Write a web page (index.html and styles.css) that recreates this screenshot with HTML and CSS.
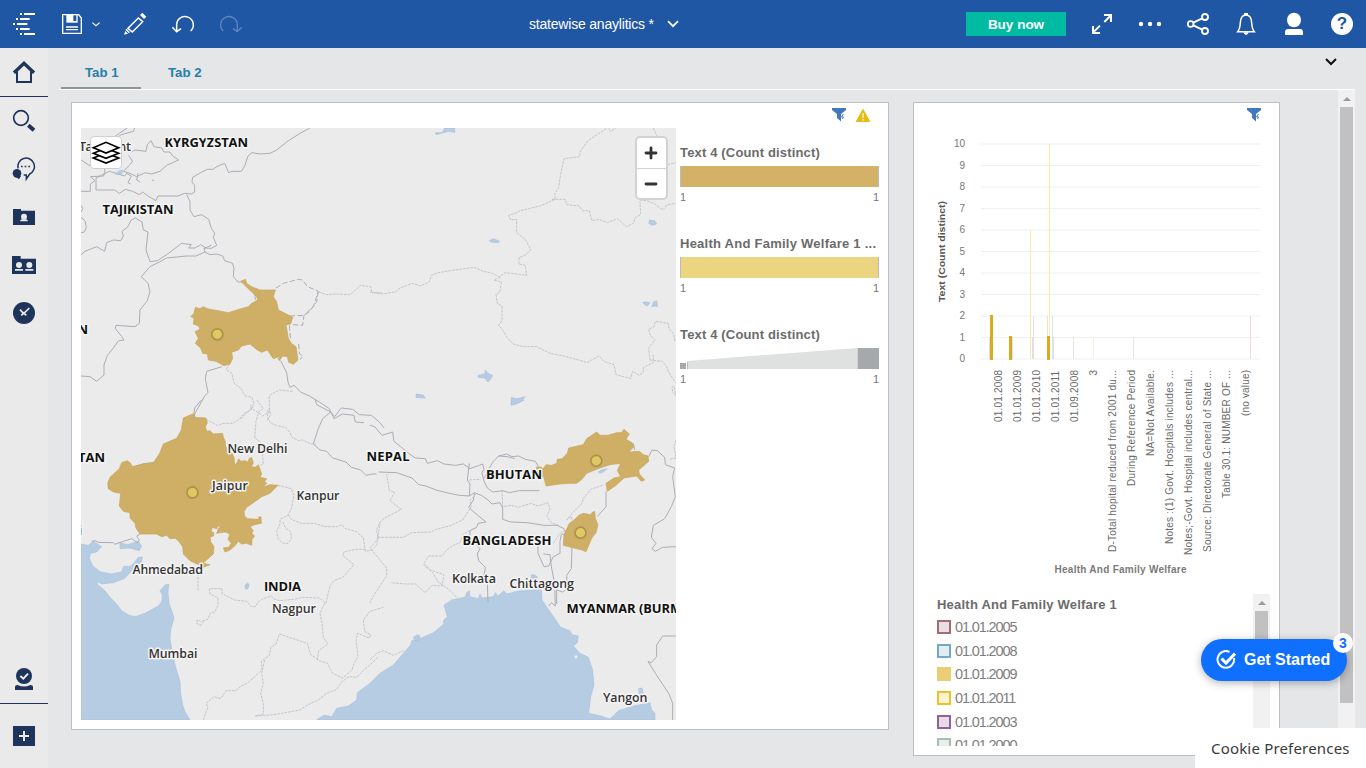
FILE: index.html
```html
<!DOCTYPE html>
<html lang="en">
<head>
<meta charset="utf-8">
<title>statewise anaylitics</title>
<link rel="stylesheet" href="styles.css">
</head>
<body>
<header class="topbar">
  <svg class="ic" width="48" height="48" viewBox="0 0 144 144"><path class="w" d="M60 39h6v6h-6zM72 39h33v6H72zM48 54h6v6h-6zM60 54h29v6H60zM39 69h6v6h-6zM51 69h31v6H51zM48 84h6v6h-6zM60 84h29v6H60zM60 99h6v6h-6zM72 99h33v6H72z"/></svg>
  <svg class="ic" width="63" height="48" viewBox="144 0 189 144"><path class="wl" stroke-width="4" d="M188 44h48l8 10v46h-56zM198 81h36M198 89h36"/><path class="w" d="M199 44h34v24h-34z"/><path fill="#2057a4" d="M220 46h9v17h-9z"/><path class="wl" stroke-width="3.500" d="M277 68l11 9 11-9"/></svg>
  <svg class="ic" width="48" height="48" viewBox="333 0 144 144"><path class="w" d="M372 104l4-11 8 8zM420 45l7-7 12 12-7 7z"/><path class="wl" stroke-width="4.500" d="M384 85l31-31 13 11-31 31zM378 88l10 10"/></svg>
  <svg class="ic" width="48" height="48" viewBox="477 0 144 144"><path class="wl" stroke-width="4.500" d="M530 95V73a25 25 0 1 1 42 20M517 82l13 13 13-9"/></svg>
  <svg class="ic dim" width="48" height="48" viewBox="621 0 144 144"><path class="wl" stroke-width="4" d="M712 95V73a25 25 0 1 0-42 20M725 82l-13 13-13-9"/></svg>
  <div class="doc"><span class="doc-name">statewise anaylitics *</span><svg width="12" height="8" viewBox="0 0 12 8"><path class="wl" stroke-width="1.700" d="M1 1.200l5 5 5-5"/></svg></div>
  <button class="buy">Buy now</button>
  <svg class="ic" width="48" height="48" viewBox="534 0 144 144"><path class="wl" stroke-width="6" d="M613 66l18-18M600 77l-18 18"/><path class="wl" stroke-width="6" d="M612 45h21v21M579 78v21h21"/></svg>
  <svg class="ic" width="48" height="48" viewBox="0 0 48 48"><g class="w"><circle cx="15" cy="24" r="2.200"/><circle cx="24" cy="24" r="2.200"/><circle cx="33" cy="24" r="2.200"/></g></svg>
  <svg class="ic" width="48" height="48" viewBox="822 0 144 144"><g class="wl" stroke-width="5.500"><circle cx="872" cy="72" r="8.500"/><circle cx="915" cy="51" r="9"/><circle cx="915" cy="93" r="9"/><path d="M880 68l27-13M880 76l27 13"/></g></svg>
  <svg class="ic" width="48" height="48" viewBox="966 0 144 144"><path class="wl" stroke-width="4.500" d="M1013 95c7-8 7-14 8-27 1-15 7-23 17-23s16 8 17 23c1 13 1 19 8 27z"/><path class="w" d="M1032 39h12v7h-12zM1030 97h16q-2 8-8 8t-8-8z"/></svg>
  <svg class="ic" width="48" height="48" viewBox="1110 0 144 144"><ellipse class="w" cx="1182" cy="60" rx="21" ry="22"/><path class="w" d="M1155 105v-8q0-10 10-10h34q10 0 10 10v8z"/></svg>
  <div class="ic help"><span>?</span></div>
</header>
<div class="shell">
  <nav class="side">
    <svg class="home" width="48" height="48" viewBox="0 144 144 144"><path fill="none" stroke="#1f345b" stroke-width="6" d="M51 214v32h42v-32"/><path fill="none" stroke="#1f345b" stroke-width="10" d="M42 218l30-28 30 28"/></svg>
    <svg width="48" height="48" viewBox="0 291 144 144"><circle cx="63" cy="354" r="22" fill="none" stroke="#1f345b" stroke-width="5"/><path stroke="#1f345b" stroke-width="12" d="M85 376l17 15"/></svg>
    <svg width="48" height="48" viewBox="0 435 144 144"><path fill="none" stroke="#1f345b" stroke-width="4.500" d="M54 505a25 25 0 1 1 35 17l-10 15v-12h-8"/><circle cx="51" cy="520" r="13"/><path d="M45 528h18l-6 10z"/><path d="M63 497h5v5h-5zM74 497h5v5h-5zM85 497h5v5h-5z"/></svg>
    <svg width="48" height="48" viewBox="0 579 144 144"><path d="M39 627h24v5h42v43H39z"/><g fill="#eaeaea"><ellipse cx="72" cy="650" rx="9" ry="9"/><path d="M61 664v-3q1-3 7-3h8q6 0 7 3v3z"/></g></svg>
    <svg width="48" height="48" viewBox="0 723 144 144"><path d="M36 768h26v8h46v46H36z"/><g fill="#eaeaea"><circle cx="57" cy="795" r="9"/><circle cx="88" cy="795" r="9"/><path d="M45 807h24v5H45zM76 807h24v5H76z"/></g></svg>
    <svg width="48" height="48" viewBox="0 867 144 144"><circle cx="72" cy="939" r="33"/><path fill="none" stroke="#eaeaea" stroke-width="5" d="M60 929l11 12 17-17M64 946l7-7 8 7"/></svg>
    <span class="fill"></span>
    <svg width="48" height="48" viewBox="0 1965 144 144"><circle cx="72" cy="2028" r="24"/><path d="M45 2070v-8q0-7 8-7 19 9 38 0 8 0 8 7v8z"/><path fill="none" stroke="#eaeaea" stroke-width="6" d="M61 2028l9 8 14-15"/></svg>
    <svg class="add" width="48" height="64" viewBox="0 0 48 64"><path d="M13 22h22v20H13z"/><path stroke="#eaeaea" stroke-width="2" d="M19 32h10M24 27v10"/></svg>
  </nav>
  <main class="main">
    <div class="tabs"><a class="tab on">Tab 1</a><a class="tab">Tab 2</a><svg class="more" width="12" height="8" viewBox="0 0 12 8"><path fill="none" stroke="#111" stroke-width="2" d="M1 1l5 5 5-5"/></svg></div>
    <div class="board">
      <section class="card map-card">
        <div class="card-tools">
          <svg width="16" height="16" viewBox="0 0 16 16"><path fill="#4178be" d="M1 1h14v2l-5 4v7.500L6 11V7L1 3z"/><path stroke="#4178be" stroke-width="1" fill="none" d="M12.500 7l-2 3h2l-1 2"/></svg>
          <svg width="16" height="16" viewBox="0 0 16 16"><path fill="#e3bc13" d="M8 1.500l7.500 13.500H.5z"/><path stroke="#fff1a8" stroke-width="1.600" d="M8 6v5M8 12v1.500"/></svg>
        </div>
        <div class="map-row">
          <div class="map">
            <svg width="595" height="592" viewBox="81 128 595 592">
              <rect x="81" y="128" width="595" height="592" fill="#ebebeb"/>
              <g transform="translate(70 400) scale(.33333)">
                <g class="water">
                  <path d="M33 432L55 436 70 424 95 440 80 456 62 460 58 475 68 497 90 515 125 522 155 515 162 498 178 500 192 490 205 472 217 472 215 485 195 500 165 535 130 548 95 552 84 545 82 553 105 572 120 592 140 612 155 632 178 646 195 650 225 640 265 618 275 605 277 585 270 572 285 555 297 552 294 575 297 610 308 640 312 655 303 685 300 715 308 765 318 805 330 845 332 880 338 915 345 935 360 960 33 960z"/>
                  <path d="M150 428L172 434 205 424 215 438 208 452 180 444 150 446zM524 558l8-10 6 6-4 12-6 2z"/>
                </g>
                <path class="border" d="M65 424L75 422 85 427 130 428 134 433 160 424 185 416 202 428 208 420 200 408 210 402M394 0l-20 24-2 16M250 188l-30 3-34 12M736 0l4 14 42 22 12 14 20-26 34 4 20 16 36 2 24 20 14 18M782 36l-24 20-14 32-14 44 20 18 20 4 18 20 40 12 16 16 28 8 16 16 20-4 12 0"/>
                <path class="admin" d="M408 58l34 18 20-6 26 0 20-12 14-18 22-10-2-20M560 0l20 26-14 10-8 28-4 50 20 14 6 64-12 6M594 30l-2 20 10 20 24 8 20 4 14 16 6 14 20 10 12-2 24 12 16 0M624 256l40 10 8 20-8 40-10 20-24 12 0 14-10 22 4 22 16 14 14 0 10-14-2-22-14-8-10-20M654 344l10 14 30 12 40 0 30 10 38 0 14-6 10 12 32 8 22 20 6 40 20-4 14-16 10-64M886 448l-30 0-34 8-4 10 24 20 10 8-34 38-26 10-10 12-6 20-8 36-20-16-48-2-30 6-40 4-20-6-6-8-24 8-16 10-8 14-12 0-14-16-36-4-24-12-14-8 0-14-38 0 2 16 24 12 0 22-10 20-14 4-6 18-20 6-12-4-2 10 12 6 10-12M384 572l0-44 14-22 2-14M764 610l-14 30 6 30 4 42 14 20-28 20-4 28 30 10 16 30 30 14 28-24 6-20 12-20-6-46 4-24 36 14 4-10-18-10-4-34 20-26 40-12M744 778l-22-14-10-34-30-10-32-10-22-8-10 30-16 10-4 24-24 18 2 26-22 20-20 18-20 10-16 14-30 0-16 24-20-6-24 20 6 12-12 30-6 30M584 780L575 820 580 850 572 880 580 910 580 942 556 948M556 948L612 944 645 938 690 930 712 915 745 900 770 880 800 868 815 845 838 830 860 832 880 812 900 795 925 770"/>
                <path class="gold" d="M340 54L373 40 375 52 408 54 412 68 406 80 410 94 420 92 430 102 458 100 460 112 466 125 466 140 480 148 492 172 494 196 502 186 506 176 513 184 525 182 534 186 537 176 545 172 550 188 544 200 556 202 565 194 575 222 570 232 590 236 584 244 590 250 578 262 600 254 624 256 600 280 575 290 550 308 530 322 522 335 524 348 532 356 568 358 565 352 573 350 574 370 554 374 540 380 550 392 545 400 554 408 546 418 545 436 530 430 515 432 505 424 494 438 480 450 465 456 460 444 476 442 484 430 474 418 480 402 466 396 440 400 445 386 452 380 444 378 440 386 426 382 424 396 432 398 430 408 420 412 422 425 432 440 430 462 414 476 400 488 408 492 420 494 400 502 386 494 360 482 340 462 338 440 325 422 316 415 300 416 290 406 275 410 260 402 210 402 198 384 195 370 180 354 180 338 160 334 148 318 152 280 130 276 115 266 113 250 120 232 148 206 155 188 172 182 182 190 186 200 220 192 250 188 268 162 280 132 320 115 334 90z"/>
              </g>
              <g transform="translate(370 400) scale(.33333)">
                <path class="water" d="M-160 960L-138 945-115 950-100 925-65 918-40 900-38 878 0 850 30 820 70 795 100 760 122 735 125 722 145 718 190 698 222 672 220 662 232 650 222 615 245 600 285 592 290 578 298 572 300 590 325 596 330 582 336 594 370 590 376 578 384 588 402 572 410 582 440 574 514 568 516 600 545 642 572 682 600 692 606 704 625 708 622 728 610 738 630 760 655 772 668 810 672 855 662 890 656 940 690 947 720 957 745 932 790 918 840 908 845 930 855 940 855 960zM424 0l0 14 14-2 24-12zM484 524l8 0 10 6-4 10-14-6zM806 866l10-2 4 16-12 4z"/>
                <path class="water" d="M130 712l12-8 8 4-2 10-14 6z"/>
                <path class="land" d="M612 768l8-2 4 6-8 4z"/>
                <path class="border" d="M0 76l14 4 22 26 32-10 4 28 20 16 24 20 20 14 30 2 6 14 30-8 20 10 34 4 24-4 20 14 28-10 10-4 4 16-6 10 6 26 10 20 16 12 30-4 20 6 30-6 60 0M298 190l-6 50 8 12-2 36-30-2-30-6-40-10-30-12-22-4-20-20-46-16-54-2M344 234l14-30 12-20 16-16 24-6 16 8 20-2 20 10 30 6 8 14M386 168l26 2 22 6M298 288l16-10 20 8 20 14 12 12 24-4 8 16v34l24 8 50 2 50 8 40 0 20 10 6 14-14 4-4 20 0 36-20 10-14 28-14 2-18-40 0-24 14-10M314 280l-4 20-14 22 30 26 22 18-24 4-4 12-20 10 0 20 30 34-8 16 4 20 20 20-4 24 10 20 2 60M520 462l20 2 4 36 10 50 2 68-12-10-8 10M606 440l-2 66-14 20 2 40-14 10-18-6 0 42M708 274l0 46-26 30M790 130l4 20M836 170L846 150 862 152 884 172 886 194 914 204 908 230 916 290 904 320 884 356 850 376 844 412 858 430 846 446 856 454 878 442 918 440M918 708L878 708 860 735 860 770 844 788 834 784 856 820 876 850 896 880 908 910 908 960"/>
                <path class="admin" d="M396 270l2 50 26-4 20 6 40-12 20 8 30-10 6 20-10 20 14 20 22 8M298 240l30-2M608 370l-4-20-14 10 18-22 30-30 0-10 24-30 40-14M550 430l20-30 14-8M50 222l8 50 16 4-14 26 34 26-50 26-14 12-10 24 4 26-24 28 50 60 0 24-40 60-10 20M24 412l76 0 24-14 60-2 14-8 40-10 40-18 26-40-4-20 20-20M310 386l-30 16-10 26-20 8-20 14-14 18-40 0-14 22 20 20 40 14-6 34-30-2-20 22-30-26-30 0-44-4M160 494l30 26 14 26 30 20 30 30M0 780l20-20 20-8 30 14 30-14M918 120l-6 20 6 34-20 4"/>
                <g class="gold"><path d="M498 202L510 200 520 206 528 194 545 196 560 190 562 178 576 176 592 160 596 144 640 134 650 116 662 108 680 96 690 106 714 106 740 98 754 98 762 88 778 102 768 118 786 128 792 140 776 156 808 154 820 164 834 168 836 184 820 198 806 210 808 222 824 240 814 244 800 228 762 234 738 256 712 274 708 250 732 234 752 230 742 212 752 190 720 194 690 204 650 220 636 238 620 250 600 250 570 252 528 258 522 232 510 226z"/><path d="M628 345L640 340 662 344 666 338 674 334 676 355 684 374 678 398 665 415 648 455 636 450 612 444 580 436 582 405 598 370 610 362z"/></g>
                <path class="water" d="M684 216l10-6 18-4-12 10-10 4z"/>
              </g>
              <g transform="translate(70 120) scale(.33333)">
                <path class="border" d="M172 24l-16 10-30 22M194 24l-4 10-36 10-20 14M720 24l-30 16-40 26-30 24-20 10-30 2-24-4-12 10-10 30-10 16-28 0-10 4-12-28-20 8-16 10-16 0-20 10-24 14-2 14 8 10 0 20-10 6-20-2-20 8-60 0-6 14-24-14-16-12-10 8-20-10-22-6-18 12-14-10-56 0v-36l16-8 24-12 26 8 20 6 6-8 14 8-10 20 8 4M33 214h28v-22l14-10-14-12 40-2 4-16-4-10M33 84l20 10 16 4M33 120l28 18M184 96L195 90 228 94 232 74 243 62 252 80 275 84 282 96 300 96 308 108 326 120 290 136 270 154 245 162 225 158 200 170 180 160 160 154 178 136 188 124 176 106M204 160l-4 20 10 6M246 180l6 2M33 256l6 10-6 10M33 292l12 10 4 20-6 14-10 2M350 224L360 244 360 270 372 290 395 284 416 298 424 325 434 340 430 352 440 376 424 385 402 384 405 396 378 408 350 408 290 414 270 425 240 440 214 470 234 490 240 515 232 542 210 570 208 610 195 620 138 616 136 626 156 650 162 660 146 662 130 684 112 706 102 735 102 765 80 784 60 770 33 768M33 404L45 394 80 380 104 394 110 368 130 360 152 362 160 348 156 334 172 322 184 300 196 294 216 306 220 330 234 336 228 390 240 425 262 422 290 404 335 370 364 374 356 384 375 384 392 374 408 384 424 375M405 396L420 404 440 402 458 408 464 422 488 430 492 445 490 470 504 486 514 486M456 740L410 754 406 776 414 818 404 828 374 882 372 900M540 500l14 20 2 20M632 722l18 36 4 28 6 16 12-6 20 20 26 12 30 18 30 20 14 30 26-14 34 4 4 20 26 2"/>
                <path class="dashed" d="M618 504L640 490 685 478 698 480 712 500 732 508 745 514 730 560 702 586 698 616 668 614M745 514L740 545 718 575 702 586 660 588M658 616L662 660M686 672L688 700 700 710 690 718"/>
                <path class="admin" d="M484 700l-6 34-10 14 18 12 6 30 20 14 14 24 20 4 6 20-10 12 24 14 12 10 20-12 0-50 30-16 40 4M598 864l4 20-12 20M550 860l-16 14-24 26M746 516l24 8 30-2 40 2 22-18 8-10 32 4 4 18 30 0"/>
                <path class="water" d="M136 162l12-10 10-2-2 10-14 4z"/>
                <path class="gold" d="M512 484L526 478 530 490 545 500 570 510 616 510 610 530 620 545 625 570 645 580 668 592 662 612 648 614 655 655 664 670 678 680 684 720 670 733 656 727 652 710 638 708 628 722 624 716 632 708 610 716 592 690 575 697 562 690 540 672 515 678 505 690 485 697 488 715 480 732 462 737 438 724 415 720 412 702 398 700 392 684 376 670 385 655 375 635 390 628 386 618 370 612 372 594 362 590 372 580 376 562 390 566 400 560 412 566 475 578 500 570 535 560 545 550 563 540 560 530z"/>
              </g>
              <g transform="translate(370 120) scale(.33333)">
                <path class="admin" d="M0 516l36 6 40-6 14-12 38-14 24 8 26-12 6-20 20-8 50-8 60-8 26 12 22 4 26 12 18-12 50 6 14 2-4-30-20-4 2-20 20-8 14-14-14-30-18-14-10-8 0-40-18 2-6-14 24-8 10-6 60-14 46-20-2-16 12-20 6-40 10-46 46-6 4-18 22-30 30-20 30-20 8 12 46-30M546 238l40 0 4 16 38 4 10 14 20 0 8 30 20-4 26 10 30-12 28 24 22-12 2-14 18-10-2-40M810 240l20 2 24 10 24 18 14-16 26-4M850 24l12 28M892 134l26-6M392 472l-20 8 22 6-4 30-12 8 4 26 14 8 0 44-10 14 14 16 10 20 20 20 30 8 40 0 40 20 40 8 60 16 10 4 38-20 14 16 30 10 6 30 30 8 14 4 6-22 20 12 12-10 0-14 30-14 0-24M840 720L836 685 846 670 856 660 840 645 836 628 852 620 856 604 894 610 898 628 910 640 916 666M840 720L876 724 888 736 896 756 918 790M906 802l6-4 6 30-10-12z"/>
                <path class="water" d="M196 38l20 0 8-14 30 0 0 14-16-4-24 6-16 4zM358 362l12-6 20 8-6 4-22-2zM838 300l16 2 6 10-14 4-10-6zM818 548l8-3 14 3-8 10-6-2zM846 560l4-14 10-4 3 18-8-2zM324 766l20-4 2-12 8 10 14 6-6 12-8 8-10-12-20-2zM138 822l22 3 6 10-28-3zM424 832l16 4 26-6-14 16-28 10z"/>
              </g>
              <g class="pin"><circle cx="217.300" cy="334.300" r="5.500"/><circle cx="192.500" cy="492.500" r="5.500"/><circle cx="596.300" cy="460.800" r="5.500"/><circle cx="580.500" cy="532.700" r="5.500"/></g>
              <g class="place country">
                <text x="164.500" y="147" textLength="83.500">KYRGYZSTAN</text><text x="102.500" y="214" textLength="71">TAJIKISTAN</text>
                <text x="88" y="334" text-anchor="end">AFGHANISTAN</text><text x="105" y="462" text-anchor="end">PAKISTAN</text>
                <text x="264" y="591" textLength="37">INDIA</text><text x="366.500" y="461" textLength="43">NEPAL</text><text x="486" y="479.400" textLength="56">BHUTAN</text><text x="462.500" y="545.400" textLength="89">BANGLADESH</text><text x="566.500" y="612.500" textLength="129">MYANMAR (BURMA)</text>
              </g>
              <g class="place">
                <text x="79" y="151" textLength="52">Tashkent</text><text x="227.500" y="453" textLength="60">New Delhi</text><text x="212" y="490.300" textLength="36">Jaipur</text><text x="296.500" y="500" textLength="43">Kanpur</text><text class="faint" x="82.500" y="534.500" text-anchor="end">Karachi</text><text x="132.500" y="573.500" textLength="70.500">Ahmedabad</text><text x="272" y="613" textLength="44">Nagpur</text><text x="148.500" y="658" textLength="49">Mumbai</text><text x="452" y="583" textLength="44">Kolkata</text><text x="509.500" y="588" textLength="64.500">Chittagong</text><text x="603" y="702" textLength="44.500">Yangon</text>
              </g>
            </svg>
            <div class="layers"><svg width="30" height="30" viewBox="63 52 90 90"><g fill="#fff" stroke="#000" stroke-width="5"><path d="M70 115l38-15 38 15-38 15z"/><path d="M70 101l38-15 38 15-38 15z"/><path d="M70 84l38-16 38 16-38 16z"/></g></svg></div>
            <div class="zoomer"><span><svg width="14" height="14" viewBox="0 0 14 14"><path d="M2 7h10M7 2v10"/></svg></span><span><svg width="14" height="14" viewBox="0 0 14 14"><path d="M2 7h10"/></svg></span></div>
          </div>
          <div class="scales">
            <div class="scale"><h4>Text 4 (Count distinct)</h4><div class="ramp tan"></div><p><span>1</span><span>1</span></p></div>
            <div class="scale"><h4 class="wide">Health And Family Welfare 1 ...</h4><div class="ramp yellow"></div><p><span>1</span><span>1</span></p></div>
            <div class="scale"><h4>Text 4 (Count distinct)</h4><svg width="199" height="21" viewBox="0 0 199 21"><path fill="#dfe1e0" d="M7 13L177 0v21H7z"/><path fill="#a5a9ac" d="M0 15h6v6H0zM177.500 0H199v21h-21.500z"/><path fill="#bbb" d="M7 14h1v7H7z"/></svg><p><span>1</span><span>1</span></p></div>
          </div>
        </div>
      </section>
      <section class="card chart-card">
        <div class="card-tools">
          <svg width="16" height="16" viewBox="0 0 16 16"><path fill="#4178be" d="M1 1h14v2l-5 4v7.500L6 11V7L1 3z"/><path stroke="#4178be" stroke-width="1" fill="none" d="M12.500 7l-2 3h2l-1 2"/></svg>
        </div>
        <svg class="chart" width="365" height="464" viewBox="914 128 365 464">
          <path stroke="#f0f0f0" d="M981 144h279M981 165.500h279M981 187h279M981 208.500h279M981 230h279M981 251.500h279M981 273h279M981 294.500h279M981 316h279M981 337.500h279M981 359h279"/>
          <g class="tick"><text x="965" y="147">10</text><text x="965" y="168.500">9</text><text x="965" y="190">8</text><text x="965" y="211.500">7</text><text x="965" y="233">6</text><text x="965" y="254.500">5</text><text x="965" y="276">4</text><text x="965" y="297.500">3</text><text x="965" y="319">2</text><text x="965" y="340.500">1</text><text x="965" y="362">0</text></g>
          <g><path stroke="#faeaab" d="M1030.500 230v129M1049.500 144v215"/><path stroke="#d8e4ed" d="M1033.500 316v43M1047.500 316v43M1052.500 316v43"/><path stroke="#e3dbe6" d="M989.500 337v22M1012.500 337v22M1032.500 337v22M1053.500 337v22"/><path stroke="#e4e7da" d="M1073.500 337v22M1133.500 337v22"/><path stroke="#f8efdf" d="M1093.500 337v22"/><path stroke="#f2dada" d="M1250.500 316v43"/></g>
          <path fill="#d8ac1e" d="M990 315h3v45h-3zM1009 336h3v24h-3zM1047 336h3v24h-3z"/>
          <text class="ytitle" transform="translate(945 302) rotate(-90)" textLength="101" lengthAdjust="spacingAndGlyphs">Text (Count distinct)</text>
          <g class="cat">
            <text transform="translate(1002 422) rotate(-90)" textLength="52">01.01.2008</text><text transform="translate(1021 422) rotate(-90)" textLength="52">01.01.2009</text><text transform="translate(1040 422) rotate(-90)" textLength="52">01.01.2010</text><text transform="translate(1059 422) rotate(-90)" textLength="51">01.01.2011</text><text transform="translate(1078 422) rotate(-90)" textLength="52">01.09.2008</text><text transform="translate(1097 375.500) rotate(-90)">3</text>
            <text transform="translate(1116 552) rotate(-90)" textLength="182">D-Total hopital reduced from 2001 du...</text><text transform="translate(1135 486) rotate(-90)" textLength="116">During Reference Period</text><text transform="translate(1154 456) rotate(-90)" textLength="86">NA=Not Available.</text><text transform="translate(1173 544) rotate(-90)" textLength="174">Notes :(1) Govt. Hospitals includes ...</text><text transform="translate(1192 555) rotate(-90)" textLength="185">Notes;-Govt. Hospital includes central...</text><text transform="translate(1211 552) rotate(-90)" textLength="182">Source: Directorate General of State ...</text><text transform="translate(1230 498) rotate(-90)" textLength="128">Table 30.1: NUMBER OF ...</text><text transform="translate(1249 416) rotate(-90)" textLength="46">(no value)</text>
          </g>
          <text class="xtitle" x="1054.500" y="573" textLength="132">Health And Family Welfare</text>
        </svg>
        <div class="legend">
          <div class="legend-list">
            <h4>Health And Family Welfare 1</h4>
            <div class="key"><i class="k1"></i>01.01.2005</div><div class="key"><i class="k2"></i>01.01.2008</div><div class="key"><i class="k3"></i>01.01.2009</div><div class="key"><i class="k4"></i>01.01.2011</div><div class="key"><i class="k5"></i>01.01.2003</div><div class="key"><i class="k6"></i>01.01.2000</div>
          </div>
          <div class="bar"><b></b><i></i></div>
        </div>
      </section>
      <div class="bar page-bar"><b></b><i></i></div>
    </div>
  </main>
</div>
<div class="cookie">Cookie Preferences</div>
<div class="start"><svg width="20" height="20" viewBox="0 0 20 20"><path fill="none" stroke="#fff" stroke-width="2" d="M13.500 2A8.300 8.300 0 1 0 18 8"/><path fill="none" stroke="#fff" stroke-width="3" d="M5.500 8.500l4.500 4.500 9-9.500"/></svg><span>Get Started</span><b class="count">3</b></div>
</body>
</html>
```
FILE: styles.css
```css
* { box-sizing: border-box; }
body { margin: 0; width: 1366px; height: 768px; overflow: hidden; background: #e5e6e8; font-family: "Liberation Sans", Arial, sans-serif; color: #5f5f5f; }
svg { display: block; flex: none; }
h4, p { margin: 0; }
.topbar { height: 48px; background: #2057a4; display: flex; align-items: center; color: #fff; }
.ic { flex: none; }
.w { fill: #fff; }
.wl { fill: none; stroke: #fff; }
.dim { opacity: .28; }
.doc { flex: 1; display: flex; align-items: center; gap: 13px; padding-left: 274px; }
.doc-name { font-size: 14px; width: 125px; white-space: nowrap; letter-spacing: -.2px; }
.buy { width: 100px; height: 24px; margin: 0 12px 0 0; padding: 0; border: 0; background: #00baa1; color: #fff; font: bold 13.500px "Liberation Sans", Arial, sans-serif; }
.help { width: 48px; display: flex; justify-content: center; }
.help span { width: 22px; height: 22px; border-radius: 50%; background: #fff; color: #2057a4; font: bold 17px/22px "Liberation Sans", Arial, sans-serif; text-align: center; }
.shell { display: flex; height: 720px; }
.side { width: 48px; background: #eaeaea; display: flex; flex-direction: column; fill: #1f345b; }
.side .home { height: 49px; border-bottom: 1px solid #1f345b; }
.side .add { border-top: 1px solid #1f345b; height: 65px; }
.fill { flex: 1; }
.main { width: 1318px; display: flex; flex-direction: column; }
.tabs { height: 42px; margin: 0 11px; border-bottom: 1px solid #fff; display: flex; padding-left: 2px; align-items: flex-start; }
.tab { height: 41px; padding: 0 22px 0 24px; width: 80px; margin-right: 3px; color: #2380aa; font-weight: bold; font-size: 13.200px; line-height: 49px; white-space: nowrap; }
.tab.on { border-bottom: 2px solid #8c9696; }
.more { margin: 10px 18px 0 auto; }
.board { flex: 1; display: flex; align-items: flex-start; padding-left: 23px; height: 678px; }
.card { background: #fff; border: 1px solid #bdbfc2; margin-top: 12px; }
.map-card { width: 818px; height: 628px; margin-right: 24px; }
.chart-card { width: 367px; height: 654px; }
.card-tools { height: 25px; padding: 4px 17px 0 0; display: flex; justify-content: flex-end; gap: 8px; }
.map-row { display: flex; padding-left: 9px; gap: 4px; }
.map { position: relative; width: 595px; height: 592px; overflow: hidden; }
.water { fill: #b6cce3; stroke: #9dbcdc; stroke-width: 1.5; }
.land { fill: #ebebeb; }
.border { fill: none; stroke: #acacb6; stroke-width: 3; stroke-linejoin: round; }
.dashed { fill: none; stroke: #acacb6; stroke-width: 3; stroke-dasharray: 16 7; }
.admin { fill: none; stroke: #bcbcc6; stroke-width: 2.500; stroke-dasharray: 8 3; }
.gold { fill: #cfae66; stroke: #c5a458; stroke-width: 2; }
.pin { fill: #e0c965; stroke: #ad944b; stroke-width: 1.800; }
.place { font: 600 12.500px "Open Sans", "Noto Sans", sans-serif; fill: #333; paint-order: stroke; stroke: #f4f4f4; stroke-width: 3px; stroke-linejoin: round; }
.place.country { font-weight: 700; font-size: 13px; fill: #111; }
.place .faint { fill: #888; }
.layers { position: absolute; left: 9px; top: 8px; width: 32px; height: 33px; border: 1px solid #d0d0d0; border-radius: 4px; background: #fff; }
.zoomer { position: absolute; left: 554px; top: 8px; width: 33px; height: 64px; border: 2px solid #d2d2d2; border-radius: 5px; background: #fff; stroke: #333; stroke-width: 2.800; stroke-linecap: round; }
.zoomer span { display: flex; height: 30px; align-items: center; justify-content: center; padding-right: 1px; }
.zoomer span + span { border-top: 1px solid #d2d2d2; }
.scales { width: 199px; padding-top: 16px; color: #666; }
.scale { height: 91px; }
.scale h4 { font-size: 13px; line-height: 17px; height: 22px; white-space: nowrap; letter-spacing: .16px; color: #6b6b6b; }
.scale h4.wide { letter-spacing: .25px; }
.ramp { height: 21px; border: solid #bbb; border-width: 0 1px; }
.tan { background: #d3b166; }
.yellow { background: #ebd580; }
.scale p { display: flex; justify-content: space-between; font-size: 11px; line-height: 20px; color: #777; }
.tick { font-size: 10px; text-anchor: end; fill: #777; }
.ytitle { font-size: 9px; font-weight: bold; fill: #555; }
.cat { font-size: 10px; fill: #6a6a6a; }
.xtitle { font-size: 10px; font-weight: bold; fill: #7a7a7a; }
.legend { display: flex; padding: 0 9px 0 23px; margin-top: -1px; justify-content: space-between; }
.legend-list { height: 155px; overflow: hidden; }
.legend h4 { font-size: 13px; line-height: 21px; height: 24px; padding-top: 3px; color: #6b6b6b; letter-spacing: .22px; }
.key { height: 23.700px; display: flex; align-items: center; gap: 4px; font-size: 14.500px; letter-spacing: -1.120px; color: #808080; }
.key i { width: 14px; height: 14px; border: 2px solid; }
.key .k1 { border-color: #a26b76; background: #eadfe2; }
.key .k2 { border-color: #75a9bf; background: #e1ecf3; }
.key .k3 { border-color: #eace76; background: #eace76; }
.key .k4 { border-color: #eac22e; background: #fdf3cf; }
.key .k5 { border-color: #8f6393; background: #e7dbe8; }
.key .k6 { border-color: #a7bfb2; background: #e9f0ec; }
.bar { width: 17px; background: #f1f1f1; height: 137px; margin-top: 3px; padding: 0 2px; }
.bar b { display: block; width: 0; margin: 7px auto 6px 2.500px; border: 4px solid transparent; border-top: 0; border-bottom-color: #9b9b9b; }
.bar i { display: block; height: 60px; background: #c1c1c1; }
.page-bar { height: 678px; margin: 0 0 0 58px; }
.page-bar i { height: 596px; }
.cookie { position: absolute; left: 1195px; top: 728px; width: 171px; height: 40px; background: #fff; padding-left: 16px; font: 15px/41px "Noto Sans", sans-serif; letter-spacing: .18px; color: #3a3a3a; white-space: nowrap; }
.start { position: absolute; left: 1201px; top: 639px; width: 146px; height: 42px; border-radius: 21px; background: #0f6fff; box-shadow: 0 2px 8px rgba(0,0,0,.3); color: #fff; display: flex; align-items: center; gap: 8px; padding-left: 15px; font-size: 16px; font-weight: bold; }
.start span { white-space: nowrap; }
.count { position: absolute; right: -6px; top: -6px; width: 20px; height: 20px; border-radius: 50%; background: #fff; color: #0f6fff; font-size: 14px; line-height: 21px; text-align: center; }
```
